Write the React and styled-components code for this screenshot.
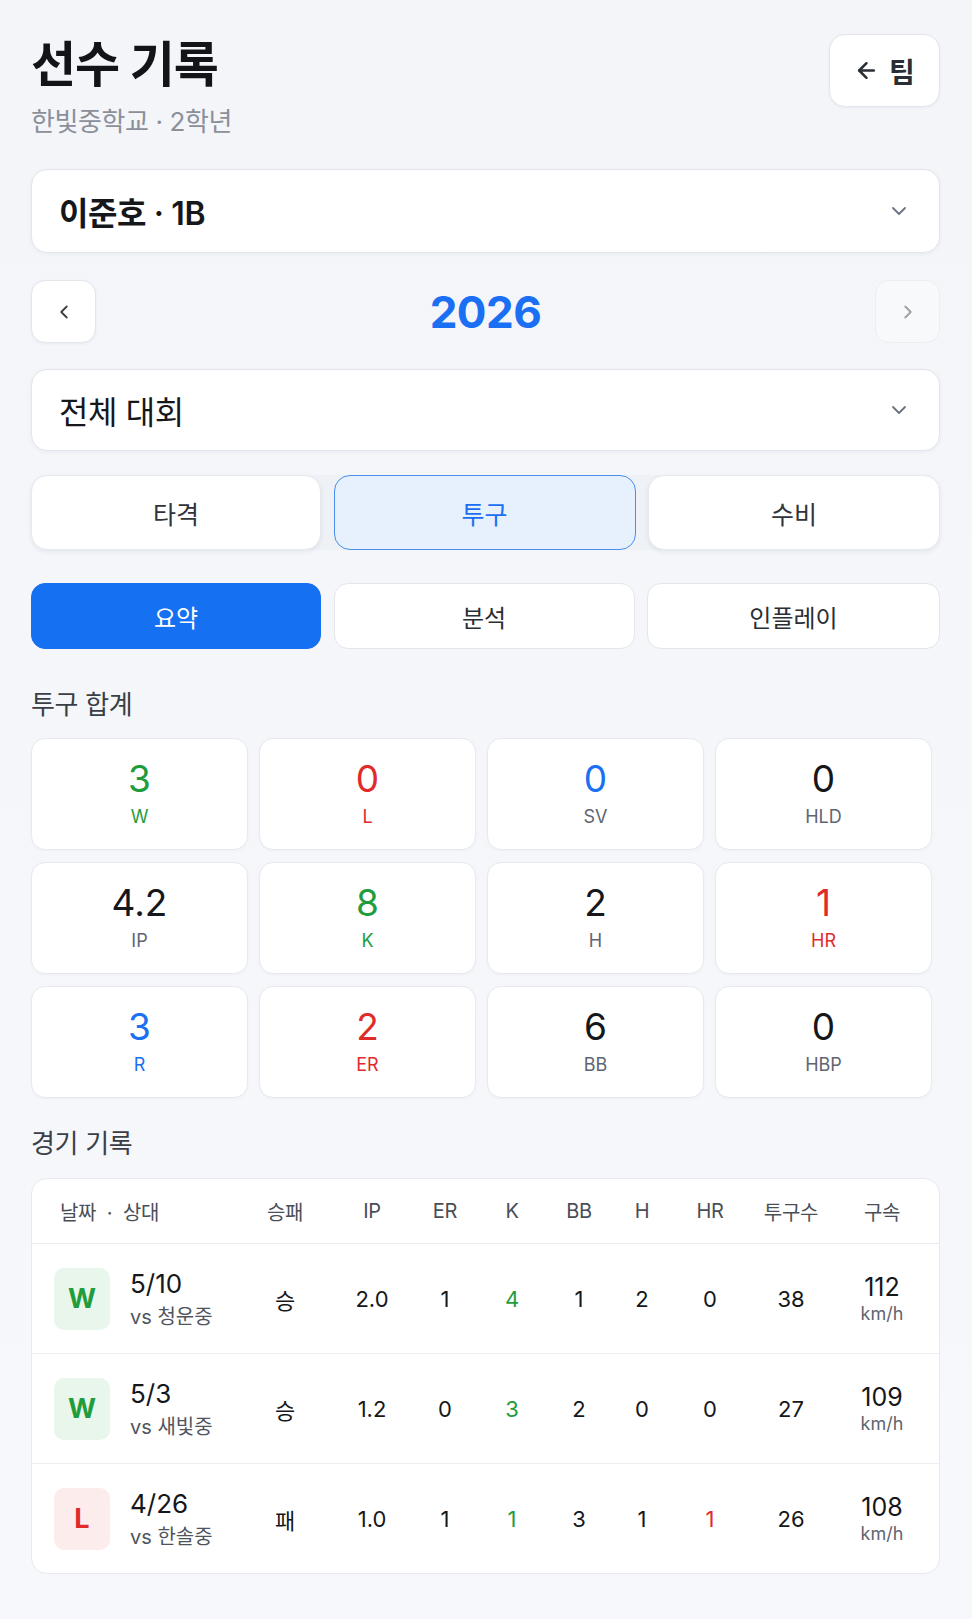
import React from 'react';
import styled, { createGlobalStyle } from 'styled-components';
import { ChevronDown, ChevronLeft, ChevronRight, ArrowLeft } from 'lucide-react';

const GlobalStyle = createGlobalStyle`
  body {
    margin: 0;
    background: #f4f6fa;
    font-family: "Inter", "Noto Sans CJK KR", "Noto Sans", sans-serif;
    color: #15171a;
  }
`;

const colors = {
  green: '#1f9d3c',
  red: '#e02b2b',
  blue: '#1a6ff2',
  dark: '#15171a',
  gray: '#5f6570',
};

const totals = [
  { value: '3', label: 'W', valueColor: colors.green, labelColor: colors.green },
  { value: '0', label: 'L', valueColor: colors.red, labelColor: colors.red },
  { value: '0', label: 'SV', valueColor: colors.blue, labelColor: colors.gray },
  { value: '0', label: 'HLD', valueColor: colors.dark, labelColor: colors.gray },
  { value: '4.2', label: 'IP', valueColor: colors.dark, labelColor: colors.gray },
  { value: '8', label: 'K', valueColor: colors.green, labelColor: colors.green },
  { value: '2', label: 'H', valueColor: colors.dark, labelColor: colors.gray },
  { value: '1', label: 'HR', valueColor: colors.red, labelColor: colors.red },
  { value: '3', label: 'R', valueColor: colors.blue, labelColor: colors.blue },
  { value: '2', label: 'ER', valueColor: colors.red, labelColor: colors.red },
  { value: '6', label: 'BB', valueColor: colors.dark, labelColor: colors.gray },
  { value: '0', label: 'HBP', valueColor: colors.dark, labelColor: colors.gray },
];

const games = [
  { result: 'W', date: '5/10', opp: 'vs 청운중', dec: '승', ip: '2.0', er: '1', k: '4', bb: '1', h: '2', hr: '0', pitches: '38', speed: '112' },
  { result: 'W', date: '5/3', opp: 'vs 새빛중', dec: '승', ip: '1.2', er: '0', k: '3', bb: '2', h: '0', hr: '0', pitches: '27', speed: '109' },
  { result: 'L', date: '4/26', opp: 'vs 한솔중', dec: '패', ip: '1.0', er: '1', k: '1', bb: '3', h: '1', hr: '1', pitches: '26', speed: '108' },
];

function App() {
  return (
    <Page>
      <GlobalStyle />
      <Header>
        <TitleBlock>
          <Title>선수 기록</Title>
          <Subtitle>한빛중학교 · 2학년</Subtitle>
        </TitleBlock>
        <BackButton>
          <ArrowLeft size={25} strokeWidth={2.4} />
          팀
        </BackButton>
      </Header>

      <Select $mt={31} $h={84}>
        <SelectText $weight={600}>이준호 · 1B</SelectText>
        <ChevronDown size={24} strokeWidth={1.8} color="#6b7280" />
      </Select>

      <YearRow>
        <YearNav>
          <ChevronLeft size={22} strokeWidth={2} color="#3a3f47" />
        </YearNav>
        <Year>2026</Year>
        <YearNav $disabled>
          <ChevronRight size={22} strokeWidth={2} color="#9aa0a8" />
        </YearNav>
      </YearRow>

      <Select $mt={26} $h={82}>
        <SelectText $weight={400}>전체 대회</SelectText>
        <ChevronDown size={24} strokeWidth={1.8} color="#6b7280" />
      </Select>

      <TypeTabs>
        <TypeTab>타격</TypeTab>
        <TypeTab $active>투구</TypeTab>
        <TypeTab>수비</TypeTab>
      </TypeTabs>

      <ViewTabs>
        <ViewTab $active>요약</ViewTab>
        <ViewTab>분석</ViewTab>
        <ViewTab>인플레이</ViewTab>
      </ViewTabs>

      <SectionTitle $mt={40}>투구 합계</SectionTitle>
      <StatGrid>
        {totals.map((s) => (
          <StatCard key={s.label}>
            <StatValue $color={s.valueColor}>{s.value}</StatValue>
            <StatLabel $color={s.labelColor}>{s.label}</StatLabel>
          </StatCard>
        ))}
      </StatGrid>

      <SectionTitle $mt={30}>경기 기록</SectionTitle>
      <Table>
        <HeadRow>
          <HeadCell $left>날짜 &nbsp;·&nbsp; 상대</HeadCell>
          <HeadCell>승패</HeadCell>
          <HeadCell>IP</HeadCell>
          <HeadCell>ER</HeadCell>
          <HeadCell>K</HeadCell>
          <HeadCell>BB</HeadCell>
          <HeadCell>H</HeadCell>
          <HeadCell>HR</HeadCell>
          <HeadCell>투구수</HeadCell>
          <HeadCell>구속</HeadCell>
        </HeadRow>
        {games.map((g) => (
          <GameRow key={g.date}>
            <GameInfo>
              <ResultBadge $win={g.result === 'W'}>{g.result}</ResultBadge>
              <DateBlock>
                <GameDate>{g.date}</GameDate>
                <Opponent>{g.opp}</Opponent>
              </DateBlock>
            </GameInfo>
            <Cell>{g.dec}</Cell>
            <Cell>{g.ip}</Cell>
            <Cell>{g.er}</Cell>
            <Cell $color={colors.green}>{g.k}</Cell>
            <Cell>{g.bb}</Cell>
            <Cell>{g.h}</Cell>
            <Cell $color={g.hr !== '0' ? colors.red : undefined}>{g.hr}</Cell>
            <Cell>{g.pitches}</Cell>
            <SpeedCell>
              <Speed>{g.speed}</Speed>
              <SpeedUnit>km/h</SpeedUnit>
            </SpeedCell>
          </GameRow>
        ))}
      </Table>
    </Page>
  );
}

export default App;

const Page = styled.div`
  min-height: 1619px;
  box-sizing: border-box;
  padding: 34px 32px 40px 31px;
  background: linear-gradient(180deg, #f3f5f9 0%, #f6f8fb 100%);
`;

const Header = styled.div`
  display: flex;
  justify-content: space-between;
  align-items: flex-start;
`;

const TitleBlock = styled.div`
  margin-top: 3px;
`;

const Title = styled.h1`
  margin: 0;
  font-size: 49px;
  line-height: 56px;
  font-weight: 700;
  letter-spacing: -1px;
  color: #121417;
`;

const Subtitle = styled.div`
  margin-top: 13px;
  font-size: 26px;
  line-height: 32px;
  color: #8a9099;
  letter-spacing: -0.4px;
`;

const BackButton = styled.button`
  width: 111px;
  height: 73px;
  display: flex;
  align-items: center;
  justify-content: center;
  gap: 10px;
  background: #fff;
  border: 1px solid #e2e5ea;
  border-radius: 16px;
  font-family: inherit;
  font-size: 28px;
  font-weight: 600;
  color: #2a2e35;
  box-shadow: 0 1px 3px rgba(20, 30, 50, 0.05);
`;

const Select = styled.div`
  margin-top: ${(p) => p.$mt}px;
  height: ${(p) => p.$h}px;
  box-sizing: border-box;
  display: flex;
  align-items: center;
  justify-content: space-between;
  padding: 0 28px 0 27px;
  background: #fff;
  border: 1px solid #e2e5ea;
  border-radius: 16px;
  box-shadow: 0 1px 4px rgba(20, 30, 50, 0.05);
`;

const SelectText = styled.span`
  font-size: 32px;
  font-weight: ${(p) => p.$weight};
  color: #15171a;
  letter-spacing: -0.4px;
`;

const YearRow = styled.div`
  margin-top: 27px;
  height: 63px;
  display: flex;
  align-items: center;
  justify-content: space-between;
`;

const YearNav = styled.button`
  width: 65px;
  height: 63px;
  display: flex;
  align-items: center;
  justify-content: center;
  background: ${(p) => (p.$disabled ? '#f8f9fb' : '#fff')};
  border: 1px solid ${(p) => (p.$disabled ? '#eceef2' : '#e2e5ea')};
  border-radius: 14px;
  box-shadow: ${(p) => (p.$disabled ? 'none' : '0 1px 3px rgba(20, 30, 50, 0.05)')};
`;

const Year = styled.div`
  font-size: 44px;
  font-weight: 700;
  color: #1a6ff2;
  letter-spacing: -0.5px;
`;

const TypeTabs = styled.div`
  margin-top: 24px;
  display: grid;
  grid-template-columns: 290px 302px 292px;
  justify-content: space-between;
  background: #eef1f5;
  border-radius: 16px;
`;

const TypeTab = styled.button`
  height: 75px;
  font-family: inherit;
  font-size: 25px;
  font-weight: 400;
  color: ${(p) => (p.$active ? '#1a6ff2' : '#30343b')};
  background: ${(p) => (p.$active ? '#e7f0fd' : '#fff')};
  border: ${(p) => (p.$active ? '1.5px solid #4a8ef0' : '1px solid #e6e9ee')};
  border-radius: 16px;
  box-shadow: ${(p) => (p.$active ? 'none' : '0 2px 5px rgba(20, 30, 50, 0.07)')};
`;

const ViewTabs = styled.div`
  margin-top: 33px;
  display: grid;
  grid-template-columns: 290px 301px 293px;
  justify-content: space-between;
`;

const ViewTab = styled.button`
  height: 66px;
  font-family: inherit;
  font-size: 24px;
  font-weight: 400;
  color: ${(p) => (p.$active ? '#fff' : '#2a2e35')};
  background: ${(p) => (p.$active ? '#1570f2' : '#fff')};
  border: 1px solid ${(p) => (p.$active ? '#1570f2' : '#e3e6eb')};
  border-radius: 14px;
`;

const SectionTitle = styled.h2`
  margin: ${(p) => p.$mt}px 0 0;
  font-size: 26px;
  line-height: 32px;
  font-weight: 400;
  color: #3a3f47;
  letter-spacing: -0.3px;
`;

const StatGrid = styled.div`
  margin: 17px 8px 0 0;
  display: grid;
  grid-template-columns: repeat(4, 1fr);
  gap: 12px 11px;
`;

const StatCard = styled.div`
  height: 112px;
  box-sizing: border-box;
  display: flex;
  flex-direction: column;
  align-items: center;
  padding-top: 18px;
  background: #fff;
  border: 1px solid #e6e9ee;
  border-radius: 14px;
  box-shadow: 0 1px 3px rgba(20, 30, 50, 0.03);
`;

const StatValue = styled.div`
  font-size: 37px;
  line-height: 44px;
  font-weight: 400;
  color: ${(p) => p.$color};
`;

const StatLabel = styled.div`
  margin-top: 4px;
  font-size: 18px;
  line-height: 24px;
  color: ${(p) => p.$color};
`;

const Table = styled.div`
  margin-top: 18px;
  background: #fff;
  border: 1px solid #e6e9ee;
  border-radius: 16px;
  overflow: hidden;
`;

const tableColumns = '187px 88px 86px 60px 74px 60px 66px 70px 92px 90px';

const HeadRow = styled.div`
  height: 64px;
  display: grid;
  grid-template-columns: ${tableColumns};
  align-items: center;
  padding: 0 14px 0 22px;
  border-bottom: 1px solid #e8ebef;
`;

const HeadCell = styled.div`
  text-align: ${(p) => (p.$left ? 'left' : 'center')};
  padding-left: ${(p) => (p.$left ? '6px' : '0')};
  font-size: 20px;
  color: #4a4f57;
  letter-spacing: -0.3px;
  white-space: nowrap;
`;

const GameRow = styled.div`
  height: 109px;
  display: grid;
  grid-template-columns: ${tableColumns};
  align-items: center;
  padding: 0 14px 0 22px;
  border-bottom: 1px solid #eceef2;

  &:last-child {
    border-bottom: none;
  }
`;

const GameInfo = styled.div`
  display: flex;
  align-items: center;
  gap: 20px;
`;

const ResultBadge = styled.div`
  width: 56px;
  height: 62px;
  border-radius: 10px;
  display: flex;
  align-items: center;
  justify-content: center;
  font-size: 27px;
  font-weight: 700;
  color: ${(p) => (p.$win ? '#1f9d3c' : '#e02b2b')};
  background: ${(p) => (p.$win ? '#e8f6ec' : '#fdecec')};
`;

const DateBlock = styled.div`
  display: flex;
  flex-direction: column;
`;

const GameDate = styled.div`
  font-size: 26px;
  line-height: 32px;
  color: #15171a;
`;

const Opponent = styled.div`
  margin-top: 4px;
  font-size: 20px;
  line-height: 26px;
  color: #4f5560;
`;

const Cell = styled.div`
  text-align: center;
  font-size: 22px;
  color: ${(p) => p.$color || '#15171a'};
`;

const SpeedCell = styled.div`
  display: flex;
  flex-direction: column;
  align-items: center;
`;

const Speed = styled.div`
  font-size: 25px;
  line-height: 30px;
  color: #15171a;
`;

const SpeedUnit = styled.div`
  font-size: 18px;
  line-height: 24px;
  color: #5f6570;
`;
